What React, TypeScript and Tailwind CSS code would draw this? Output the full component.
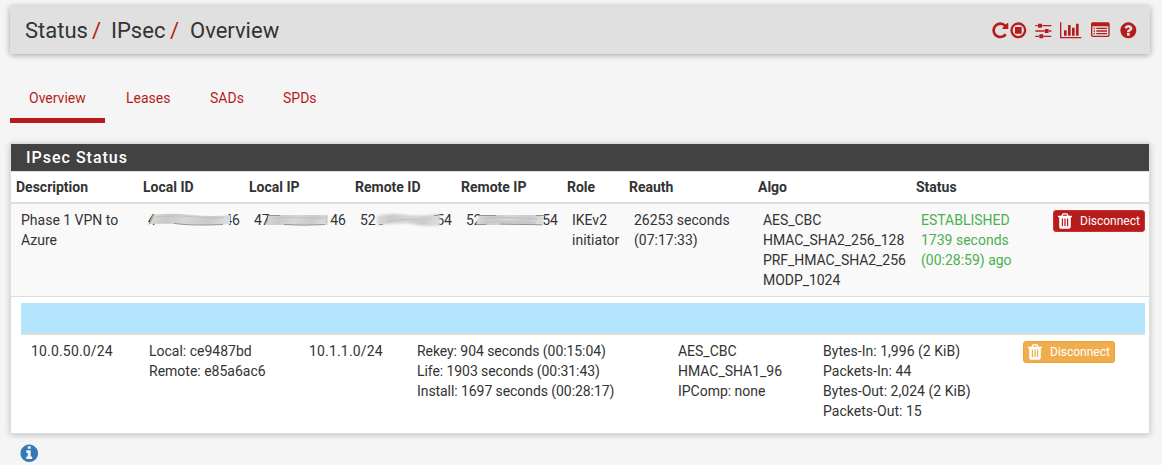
import React from "react";

type IconProps = { d: string; className: string; box?: string };

function Icon({ d, className, box = "0 0 1792 1792" }: IconProps) {
  return (
    <svg viewBox={box} className={className} fill="currentColor" aria-hidden="true">
      <path d={d} fillRule="evenodd" />
    </svg>
  );
}

const REPEAT =
  "M1664 256v448q0 26-19 45t-45 19h-448q-42 0-59-40-17-39 14-69l138-138q-148-137-349-137-104 0-198.5 40.5t-163.5 109.5-109.5 163.5-40.5 198.5 40.5 198.5 109.5 163.5 163.5 109.5 198.5 40.5q119 0 225-52t179-147q7-10 23-12 15 0 25 9l137 138q9 8 9.5 20.5t-7.5 22.5q-109 132-264 204.5t-327 72.5q-156 0-298-61t-245-164-164-245-61-298 61-298 164-245 245-164 298-61q147 0 284.5 55.5t244.5 156.5l130-129q29-31 70-14 39 17 39 59z";
const STOP =
  "M1216 608v576q0 14-9 23t-23 9h-576q-14 0-23-9t-9-23v-576q0-14 9-23t23-9h576q14 0 23 9t9 23zM896 352a544 544 0 1 0 0 1088a544 544 0 1 0 0-1088zM1664 896a768 768 0 1 1-1536 0a768 768 0 1 1 1536 0z";
const SLIDERS =
  "M480 1408v128h-352v-128h352zm352-128q26 0 45 19t19 45v256q0 26-19 45t-45 19h-256q-26 0-45-19t-19-45v-256q0-26 19-45t45-19h256zm160-384v128h-864v-128h864zm-640-512v128h-224v-128h224zm1312 1024v128h-736v-128h736zm-960-1152q26 0 45 19t19 45v256q0 26-19 45t-45 19h-256q-26 0-45-19t-19-45v-256q0-26 19-45t45-19h256zm640 512q26 0 45 19t19 45v256q0 26-19 45t-45 19h-256q-26 0-45-19t-19-45v-256q0-26 19-45t45-19h256zm320 128v128h-224v-128h224zm0-512v128h-864v-128h864z";
const CHART =
  "M640 896v512h-256v-512h256zm384-512v1024h-256v-1024h256zm1024 1152v128h-2048v-1536h128v1408h1920zm-640-896v768h-256v-768h256zm384-384v1152h-256v-1152h256z";
const LIST =
  "M160 128h1472a160 160 0 0 1 160 160v1088a160 160 0 0 1-160 160h-1472a160 160 0 0 1-160-160v-1088a160 160 0 0 1 160-160zM160 512a32 32 0 0 0-32 32v832a32 32 0 0 0 32 32h1472a32 32 0 0 0 32-32v-832a32 32 0 0 0-32-32zM256 640h128v128h-128zM512 640h1024v128h-1024zM256 896h128v128h-128zM512 896h1024v128h-1024zM256 1152h128v128h-128zM512 1152h1024v128h-1024z";
const QUESTION =
  "M1024 1376v-192q0-14-9-23t-23-9h-192q-14 0-23 9t-9 23v192q0 14 9 23t23 9h192q14 0 23-9t9-23zm256-672q0-88-55.5-163t-138.5-116-170-41q-243 0-371 213-15 24 8 42l132 100q7 6 19 6 16 0 25-12 53-68 86-92 34-24 86-24 48 0 85.5 26t37.5 59q0 38-20 61t-68 45q-63 28-115.5 86.5t-52.5 125.5v36q0 14 9 23t23 9h192q14 0 23-9t9-23q0-19 21.5-49.5t54.5-49.5q32-18 49-28.5t46-35 44.5-48 28-60.5 12.5-81zm384 192q0 209-103 385.5t-279.5 279.5-385.5 103-385.5-103-279.5-279.5-103-385.5 103-385.5 279.5-279.5 385.5-103 385.5 103 279.5 279.5 103 385.5z";
const INFO =
  "M1152 1376v-160q0-14-9-23t-23-9h-96v-512q0-14-9-23t-23-9h-320q-14 0-23 9t-9 23v160q0 14 9 23t23 9h96v320h-96q-14 0-23 9t-9 23v160q0 14 9 23t23 9h448q14 0 23-9t9-23zm-128-896v-160q0-14-9-23t-23-9h-192q-14 0-23 9t-9 23v160q0 14 9 23t23 9h192q14 0 23-9t9-23zm640 416q0 209-103 385.5t-279.5 279.5-385.5 103-385.5-103-279.5-279.5-103-385.5 103-385.5 279.5-279.5 385.5-103 385.5 103 279.5 279.5 103 385.5z";
const TRASH =
  "M704 1376v-704q0-14-9-23t-23-9h-64q-14 0-23 9t-9 23v704q0 14 9 23t23 9h64q14 0 23-9t9-23zm256 0v-704q0-14-9-23t-23-9h-64q-14 0-23 9t-9 23v704q0 14 9 23t23 9h64q14 0 23-9t9-23zm256 0v-704q0-14-9-23t-23-9h-64q-14 0-23 9t-9 23v704q0 14 9 23t23 9h64q14 0 23-9t9-23zm-544-992h448l-48-117q-7-9-17-11h-317q-10 2-17 11zm928 32v64q0 14-9 23t-23 9h-96v948q0 83-47 143.5t-113 60.5h-832q-66 0-113-58.5t-47-141.5v-952h-96q-14 0-23-9t-9-23v-64q0-14 9-23t23-9h309l70-167q15-37 54-63t79-26h320q40 0 79 26t54 63l70 167h309q14 0 23 9t9 23z";

type Smear = { shape: string; light: string; dark: string; soft: number };
type RedactedProps = { id: string; head: string; tail: string; smear: Smear };

/* An address whose middle digits are smeared out. */
function Redacted({ id, head, tail, smear }: RedactedProps) {
  return (
    <div className="relative flex h-5 w-[92px] justify-between whitespace-nowrap">
      <span>{head}</span>
      <span>{tail}</span>
      <svg className="absolute left-0 top-0 h-5 w-[92px] overflow-visible" viewBox="0 0 92 20" fill="none">
        <defs>
          <linearGradient id={id} x1="0" x2="1" y1="0" y2="0.1">
            <stop offset="0" stopColor="#dedede" />
            <stop offset="0.25" stopColor="#c9c9c9" />
            <stop offset="0.5" stopColor="#d6d6d6" />
            <stop offset="0.8" stopColor="#cacaca" />
            <stop offset="1" stopColor="#dcdcdc" />
          </linearGradient>
          <filter id={id + "-soft"} filterUnits="userSpaceOnUse" x="-6" y="-4" width="104" height="28">
            <feGaussianBlur stdDeviation={smear.soft} />
          </filter>
          <filter id={id + "-line"} filterUnits="userSpaceOnUse" x="-6" y="-4" width="104" height="28">
            <feGaussianBlur stdDeviation="0.6" />
          </filter>
        </defs>
        <path d={smear.shape} fill={`url(#${id})`} filter={`url(#${id}-soft)`} />
        <g filter={`url(#${id}-line)`}>
          <path d={smear.light} stroke="#c2c2c2" strokeWidth="1.2" />
          <path d={smear.dark} stroke="#8c8c8c" strokeWidth="0.9" />
        </g>
      </svg>
    </div>
  );
}

const smears: Record<"localId" | "localIp" | "remoteId" | "remoteIp", Smear> = {
  localId: {
    shape: "M5 4.5 Q25 3 45 5 T82 5 L82 14 Q60 15.5 42 14.5 T1 14 Z",
    light: "M8 7 Q30 5 50 7 T76 7",
    dark: "M1 14.5 L6 5 M26 13.5 Q45 16 75 14.5",
    soft: 0.7,
  },
  localIp: {
    shape: "M15 5 L74 5 L74 15 L12 15 Z",
    light: "M16 8 Q40 7 70 8 M72 6 L72 13",
    dark: "M12 5.5 L26 5.5 M11.5 14 L14 9 M30 14.5 Q50 16 71 14.5",
    soft: 0.6,
  },
  remoteId: {
    shape: "M17 5.5 Q35 3 48 5 T80 3.5 L80 16 Q65 16.5 55 14.5 T17 15 Z",
    light: "M28 12 Q42 8 58 10",
    dark: "M19 14.5 L23 14.5 M74 5.5 L78 5.5",
    soft: 1.3,
  },
  remoteIp: {
    shape: "M13 5 L76 5 L78 15 L10 15 Z",
    light: "M15 8 Q40 7 72 9 M18 12 Q40 11 70 13",
    dark: "M12 5.5 L30 5.5 M10 14.5 L20 14.5 M34 14 L76 14.8 M70 5.5 L79 5.5",
    soft: 0.6,
  },
};

function Disconnect({ tone }: { tone: string }) {
  return (
    <button
      className={`flex h-[22px] w-[92px] items-center rounded-[3px] border pl-[2px] text-[12px] leading-[18px] text-white ${tone}`}
    >
      <Icon d={TRASH} className="size-[18px] shrink-0" />
      <span className="ml-[6px]">Disconnect</span>
    </button>
  );
}

const headings = ["Description", "Local ID", "Local IP", "Remote ID", "Remote IP", "Role", "Reauth", "Algo", "Status"];
const tabs = ["Overview", "Leases", "SADs", "SPDs"];

export default function App() {
  return (
    <div className="h-[465px] w-[1162px] overflow-hidden bg-[#f5f5f5] px-[10px] pt-[6px] font-[Roboto,sans-serif] text-[14px] leading-5 text-[#333]">
      <header className="flex h-12 w-[1140px] items-center justify-between bg-[#e0e0e0] pl-[15px] pr-[12.7px] shadow-[0_1px_6px_rgba(0,0,0,0.35)]">
        <h1 className="flex pt-[2px] text-[22px] leading-6">
          <span className="w-[62px]">Status</span>
          <span className="ml-[5px] w-[19px] text-[#b71c1c]">/</span>
          <span className="w-[54px]">IPsec</span>
          <span className="ml-[5px] w-[20px] text-[#b71c1c]">/</span>
          <span>Overview</span>
        </h1>
        <div className="flex items-center text-[#b71c1c]">
          <Icon d={REPEAT} className="size-[18.67px]" />
          <Icon d={STOP} className="-ml-[1px] size-[18.67px]" />
          <Icon d={SLIDERS} className="ml-[6.6px] size-[18.67px]" />
          <Icon d={CHART} box="0 0 2048 1792" className="ml-[7.6px] h-[18.67px] w-[21.33px]" />
          <Icon d={LIST} className="ml-[9.4px] mt-[1px] size-[18.67px]" />
          <Icon d={QUESTION} className="ml-[8.8px] size-[18.67px]" />
        </div>
      </header>

      <nav className="mt-[24px] flex h-[45px] text-[#b71c1c]">
        {tabs.map((tab, i) => (
          <a
            key={tab}
            className={`pl-[19px] pt-[10px] ${
              i === 0
                ? "mr-[2px] w-[95px] border-b-[5px] border-[#b71c1c]"
                : i === 1
                  ? "w-[84px]"
                  : "w-[73px]"
            }`}
          >
            {tab}
          </a>
        ))}
      </nav>

      <section className="mt-5 h-[291px] w-[1140px] border border-[#ddd] bg-white shadow-[0_1px_6px_rgba(0,0,0,0.22)]">
        <h2 className="h-[27px] bg-[#424242] pl-[15px] text-[16px] font-medium leading-[27px] tracking-[1px] text-white">
          IPsec Status
        </h2>
        <div className="grid h-[33px] grid-cols-[127px_106px_106px_106px_106px_62px_129px_158px_1fr] border-b-2 border-t border-b-[#ddd] border-t-[#ddd] pl-[5px] pt-[5px] font-bold">
          {headings.map((h) => (
            <div key={h}>{h}</div>
          ))}
        </div>
        <div className="grid h-[93px] grid-cols-[127px_106px_106px_106px_106px_62px_129px_158px_132px_1fr] border-b border-[#ddd] bg-[#f9f9f9] pl-[10px] pt-[6px]">
          <div>Phase 1 VPN to<br />Azure</div>
          <Redacted id="local-id" head="4" tail="46" smear={smears.localId} />
          <Redacted id="local-ip" head="47" tail="46" smear={smears.localIp} />
          <Redacted id="remote-id" head="52" tail="54" smear={smears.remoteId} />
          <Redacted id="remote-ip" head="52" tail="54" smear={smears.remoteIp} />
          <div>IKEv2<br />initiator</div>
          <div>26253 seconds<br />(07:17:33)</div>
          <div className="tracking-[-0.05px]">AES_CBC<br />HMAC_SHA2_256_128<br />PRF_HMAC_SHA2_256<br />MODP_1024</div>
          <div className="text-[#4caf50]">ESTABLISHED<br />1739 seconds<br />(00:28:59) ago</div>
          <Disconnect tone="bg-[#b71c1c] border-[#d32f2f]" />
        </div>
        <div className="ml-[10px] mr-[4px] mt-[6px] h-8 border-b-2 border-[#ddd] bg-[#b3e5fc]" />
        <div className="grid grid-cols-[118px_160px_108px_261px_145px_200px_1fr] pl-[20px] pt-[6px]">
          <div className="tracking-[0.17px]">10.0.50.0/24</div>
          <div>Local: ce9487bd<br />Remote: e85a6ac6</div>
          <div className="tracking-[0.17px]">10.1.1.0/24</div>
          <div className="tracking-[-0.07px]">Rekey: 904 seconds (00:15:04)<br />Life: 1903 seconds (00:31:43)<br />Install: 1697 seconds (00:28:17)</div>
          <div className="tracking-[-0.02px]">AES_CBC<br />HMAC_SHA1_96<br />IPComp: none</div>
          <div className="tracking-[0.03px]">Bytes-In: 1,996 (2 KiB)<br />Packets-In: 44<br />Bytes-Out: 2,024 (2 KiB)<br />Packets-Out: 15</div>
          <Disconnect tone="bg-[#f0ad4e] border-[#eea236]" />
        </div>
      </section>

      <Icon d={INFO} className="ml-[8.6px] mt-[9px] size-[20.5px] text-[#337ab7]" />
    </div>
  );
}
